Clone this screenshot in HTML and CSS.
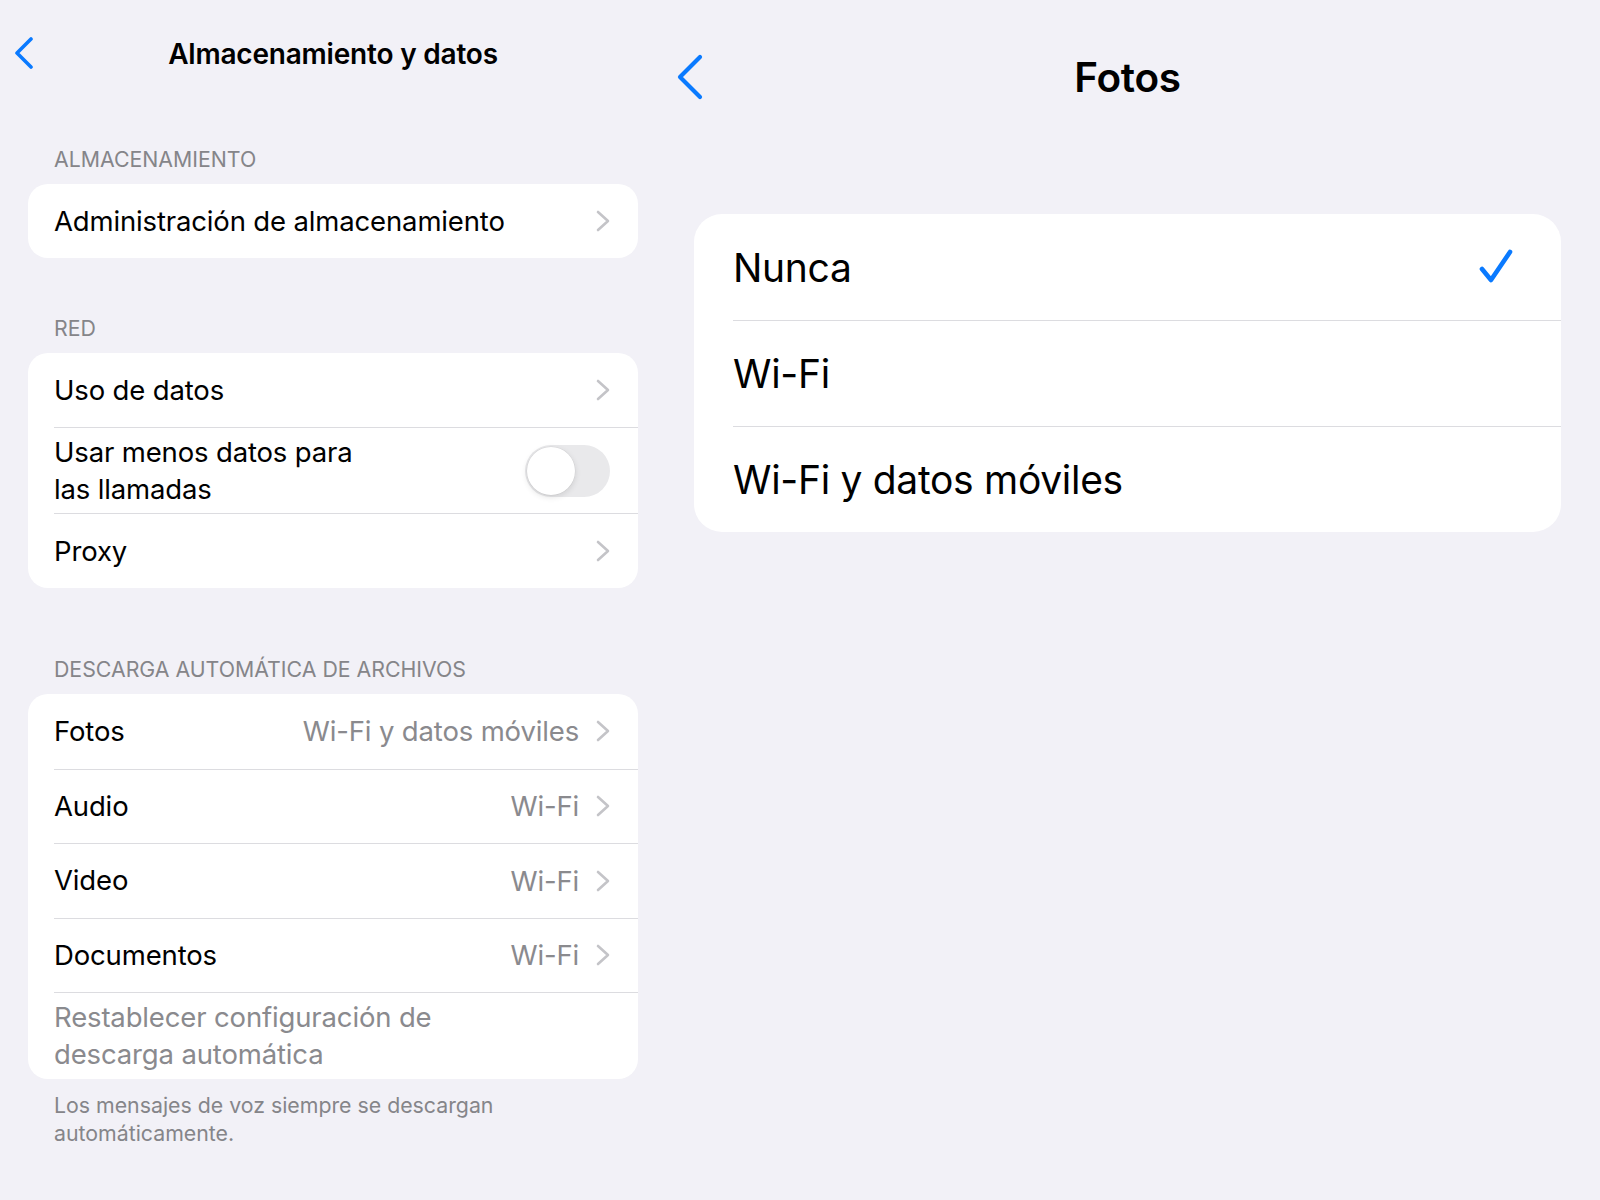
FILE: index.html
```html
<!DOCTYPE html>
<html lang="es">
<head>
<meta charset="utf-8">
<title>Almacenamiento y datos</title>
<link rel="stylesheet" href="styles.css">
</head>
<body>
<div class="split">
  <section class="pane pane-left">
    <header class="nav nav-left">
      <svg class="back back-sm" viewBox="0 0 20 32" width="20" height="32"><path d="M17 2 L3 16 L17 30" /></svg>
      <h1 class="title title-sm">Almacenamiento y datos</h1>
      <span></span>
    </header>

    <div class="group group-first">
      <div class="group-label">ALMACENAMIENTO</div>
      <div class="card">
        <div class="row">
          <span class="row-text">Administración de almacenamiento</span>
          <span class="row-end"><svg class="disc" viewBox="0 0 14 22" width="14" height="22"><path d="M2 2 L12 11 L2 20" /></svg></span>
        </div>
      </div>
    </div>

    <div class="group">
      <div class="group-label">RED</div>
      <div class="card">
        <div class="row">
          <span class="row-text">Uso de datos</span>
          <span class="row-end"><svg class="disc" viewBox="0 0 14 22" width="14" height="22"><path d="M2 2 L12 11 L2 20" /></svg></span>
        </div>
        <div class="row row-tall">
          <span class="row-text row-wrap">Usar menos datos para las llamadas</span>
          <span class="toggle"><span class="knob"></span></span>
        </div>
        <div class="row row-last">
          <span class="row-text">Proxy</span>
          <span class="row-end"><svg class="disc" viewBox="0 0 14 22" width="14" height="22"><path d="M2 2 L12 11 L2 20" /></svg></span>
        </div>
      </div>
    </div>

    <div class="group group-dl">
      <div class="group-label">DESCARGA AUTOMÁTICA DE ARCHIVOS</div>
      <div class="card card-dl">
        <div class="row">
          <span class="row-text">Fotos</span>
          <span class="row-end"><span class="value">Wi-Fi y datos móviles</span><svg class="disc" viewBox="0 0 14 22" width="14" height="22"><path d="M2 2 L12 11 L2 20" /></svg></span>
        </div>
        <div class="row">
          <span class="row-text">Audio</span>
          <span class="row-end"><span class="value">Wi-Fi</span><svg class="disc" viewBox="0 0 14 22" width="14" height="22"><path d="M2 2 L12 11 L2 20" /></svg></span>
        </div>
        <div class="row">
          <span class="row-text">Video</span>
          <span class="row-end"><span class="value">Wi-Fi</span><svg class="disc" viewBox="0 0 14 22" width="14" height="22"><path d="M2 2 L12 11 L2 20" /></svg></span>
        </div>
        <div class="row">
          <span class="row-text">Documentos</span>
          <span class="row-end"><span class="value">Wi-Fi</span><svg class="disc" viewBox="0 0 14 22" width="14" height="22"><path d="M2 2 L12 11 L2 20" /></svg></span>
        </div>
        <div class="row row-tall row-reset">
          <span class="row-text row-wrap-reset muted">Restablecer configuración de descarga automática</span>
        </div>
      </div>
      <p class="footnote">Los mensajes de voz siempre se descargan automáticamente.</p>
    </div>
  </section>

  <section class="pane pane-right">
    <header class="nav nav-right">
      <svg class="back back-lg" viewBox="0 0 28 46" width="28" height="46"><path d="M24 3 L4 23 L24 43" /></svg>
      <h1 class="title title-lg">Fotos</h1>
      <span></span>
    </header>
    <div class="card card-lg">
      <div class="opt">
        <span class="opt-text">Nunca</span>
        <svg class="check" viewBox="0 0 40 40" width="40" height="40"><path d="M6 22 L15 33 L34 5" /></svg>
      </div>
      <div class="opt">
        <span class="opt-text">Wi-Fi</span>
      </div>
      <div class="opt">
        <span class="opt-text">Wi-Fi y datos móviles</span>
      </div>
    </div>
  </section>
</div>
</body>
</html>
```

FILE: styles.css
```css
* { box-sizing: border-box; }

html, body {
  margin: 0;
  padding: 0;
  background: #f2f1f7;
}

body {
  font-family: "Inter", "Roboto", "Liberation Sans", sans-serif;
  color: #000;
  width: 1600px;
  height: 1200px;
  overflow: hidden;
}

.split {
  display: flex;
  height: 1200px;
}

.pane-left {
  width: 666px;
  flex: none;
}

.pane-right {
  flex: 1;
  padding: 0 39px 0 28px;
}

/* nav bars */
.nav {
  display: grid;
  grid-template-columns: 1fr auto 1fr;
  align-items: center;
}

.nav-left {
  height: 107px;
  padding-left: 14px;
  padding-right: 14px;
}

.nav-right {
  height: 155px;
}

.back path {
  fill: none;
  stroke: #0a7aff;
  stroke-linecap: round;
  stroke-linejoin: round;
}

.back-sm path { stroke-width: 3.6; }
.back-lg path { stroke-width: 4.2; }

.back-sm { margin-top: -1px; }

.back-lg {
  margin-top: -1px;
  margin-left: -18px;
}

.title {
  margin: 0;
  font-weight: 600;
  text-align: center;
  white-space: nowrap;
}

.title-sm {
  font-size: 28px;
  letter-spacing: -0.2px;
}

.title-lg {
  font-size: 40.5px;
  letter-spacing: -0.3px;
}

/* groups */
.group {
  margin: 0 28px;
}

.group-first { padding-top: 40px; }
.group + .group { margin-top: 58px; }
.group.group-dl { margin-top: 69px; }

.group-label {
  padding-left: 26px;
  font-size: 21.3px;
  line-height: 24px;
  color: #858589;
  margin-bottom: 13px;
}

.card {
  background: #fff;
  border-radius: 20px;
  overflow: hidden;
}

.row {
  display: flex;
  align-items: center;
  justify-content: space-between;
  min-height: 74px;
  padding: 0 28px 0 26px;
  position: relative;
}

.card-dl .row { min-height: 74.5px; }

.row + .row::before {
  content: "";
  position: absolute;
  top: 0;
  left: 26px;
  right: 0;
  height: 1px;
  background: #dcdce0;
}

.row + .row { padding-top: 1px; }

.row-tall { min-height: 86px; }
.row-last { min-height: 75px; }
.card-dl .row-reset { min-height: 87px; }

.row-text {
  font-size: 27.5px;
  line-height: 37px;
  letter-spacing: -0.15px;
}

.row-wrap {
  max-width: 340px;
}

.row-wrap-reset {
  max-width: 420px;
}

.muted { color: #8a8a8e; }

.row-end {
  display: flex;
  align-items: center;
  gap: 17px;
}

.value {
  font-size: 27.5px;
  color: #8a8a8e;
  letter-spacing: -0.15px;
}

.disc path {
  fill: none;
  stroke: #c4c4c8;
  stroke-width: 2.6;
  stroke-linecap: round;
  stroke-linejoin: round;
}

.toggle {
  width: 85px;
  height: 52px;
  border-radius: 26px;
  background: #e9e9eb;
  padding: 2px;
  display: flex;
}

.knob {
  width: 48px;
  height: 48px;
  border-radius: 50%;
  background: #fff;
  box-shadow: 0 2px 6px rgba(0,0,0,0.12), 0 0 0 0.5px rgba(0,0,0,0.06);
}

.footnote {
  margin: 12px 0 0;
  padding-left: 26px;
  font-size: 21.3px;
  line-height: 28px;
  color: #858589;
  max-width: 520px;
}

/* right card */
.card-lg {
  margin-top: 59px;
  border-radius: 28px;
}

.opt {
  display: flex;
  align-items: center;
  justify-content: space-between;
  height: 106px;
  padding: 0 49px 0 39px;
  position: relative;
}

.opt + .opt::before {
  content: "";
  position: absolute;
  top: 0;
  left: 39px;
  right: 0;
  height: 1px;
  background: #dcdce0;
}

.opt-text {
  font-size: 39px;
  letter-spacing: -0.3px;
}

.check {
  margin-right: -4px;
}

.check path {
  fill: none;
  stroke: #0a7aff;
  stroke-width: 4.6;
  stroke-linecap: round;
  stroke-linejoin: round;
}
```
